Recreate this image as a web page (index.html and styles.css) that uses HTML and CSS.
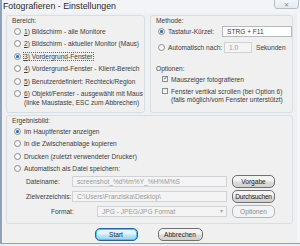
FILE: index.html
```html
<!DOCTYPE html>
<html lang="de">
<head>
    <meta charset="UTF-8">
    <title>Fotografieren - Einstellungen</title>
    <link rel="stylesheet" href="styles.css">
</head>
<body>
    <div class="window">
        <div class="titlebar">
            <span class="title">Fotografieren - Einstellungen</span>
            <span class="close">&#x2715;</span>
        </div>

        <div class="client">
            <div class="top-row">
                <div class="group bereich">
                    <div class="group-label">Bereich:</div>
                    <div class="row"><span class="radio"></span><u>1</u>) Bildschirm - alle Monitore</div>
                    <div class="row"><span class="radio"></span><u>2</u>) Bildschirm - aktueller Monitor (Maus)</div>
                    <div class="row"><span class="radio on"></span><span class="focus"><u>3</u>) Vordergrund-Fenster</span></div>
                    <div class="row"><span class="radio"></span><u>4</u>) Vordergrund-Fenster - Klient-Bereich</div>
                    <div class="row"><span class="radio"></span><u>5</u>) Benutzerdefiniert: Rechteck/Region</div>
                    <div class="row"><span class="radio"></span><u>6</u>) Objekt/Fenster - ausgewählt mit Maus</div>
                    <div class="sub-line">(linke Maustaste, ESC zum Abbrechen)</div>
                </div>

                <div class="group methode">
                    <div class="group-label">Methode:</div>
                    <div class="row field-row">
                        <span class="radio on"></span><span class="opt-text">Tastatur-Kürzel:</span>
                        <span class="input hotkey">STRG + F11</span>
                    </div>
                    <div class="row field-row second">
                        <span class="radio"></span><span class="opt-text">Automatisch nach:</span>
                        <span class="input disabled seconds">1.0</span>
                        <span class="unit">Sekunden</span>
                    </div>
                    <div class="group-label options-label">Optionen:</div>
                    <div class="check-row"><span class="check on"></span>Mauszeiger fotografieren</div>
                    <div class="check-row"><span class="check"></span>Fenster vertikal scrollen (bei Option 6)</div>
                    <div class="sub-line check-sub">(falls möglich/vom Fenster unterstützt)</div>
                </div>
            </div>

            <div class="group ergebnis">
                <div class="group-label">Ergebnisbild:</div>
                <div class="row"><span class="radio on"></span>Im Hauptfenster anzeigen</div>
                <div class="row"><span class="radio"></span>In die Zwischenablage kopieren</div>
                <div class="row"><span class="radio"></span>Drucken (zuletzt verwendeter Drucker)</div>
                <div class="row"><span class="radio"></span>Automatisch als Datei speichern:</div>

                <div class="file-row">
                    <span class="file-label">Dateiname:</span>
                    <span class="input disabled wide">screenshot_%d%m%Y_%H%M%S</span>
                    <span class="btn">Vorgabe</span>
                </div>
                <div class="file-row">
                    <span class="file-label">Zielverzeichnis:</span>
                    <span class="input disabled wide">C:\Users\Franziska\Desktop\</span>
                    <span class="btn tight">Durchsuchen</span>
                </div>
                <div class="file-row">
                    <span class="file-label format-label">Format:</span>
                    <span class="input disabled select">JPG - JPEG/JPG Format<span class="arrow">&#x25BE;</span></span>
                    <span class="btn btn-disabled">Optionen</span>
                </div>
            </div>

            <div class="actions">
                <span class="btn btn-default start">Start</span>
                <span class="btn abort">Abbrechen</span>
            </div>
        </div>
    </div>
</body>
</html>
```

FILE: styles.css
```css
/* General Styles */
* {
    margin: 0;
    padding: 0;
    box-sizing: border-box;
}

body {
    width: 300px;
    height: 246px;
    overflow: hidden;
    font-family: 'Liberation Sans', Arial, sans-serif;
    font-size: 6.6px;
    color: #3c3c3c;
    background: #e9eef4;
}

u {
    text-decoration: underline;
}

.window {
    width: 300px;
    height: 244px;
    border-left: 2px solid #8ea3bb;
    border-bottom: 1px solid #8ea3bb;
    background: #f2f4f7;
}

/* Title bar */
.titlebar {
    height: 13px;
    position: relative;
    padding-left: 1px;
}

.title {
    font-size: 8.8px;
    line-height: 12px;
    color: #2a2a2a;
}

.close {
    position: absolute;
    right: 1px;
    top: -3px;
    width: 25px;
    height: 12px;
    border: 1px solid #b5bfcb;
    border-radius: 3px;
    background: linear-gradient(#f7f9fb, #e4e9ef);
    color: #7a8796;
    font-size: 6px;
    line-height: 12px;
    text-align: center;
    padding-top: 1px;
}

/* Client area */
.client {
    height: 230px;
    margin-right: 3px;
    margin-left: 1px;
    padding: 2px 4px 0 3px;
    background: #f0f0f0;
}

.top-row {
    display: flex;
    gap: 5px;
}

.group {
    border: 1px solid #d5dfe5;
    border-radius: 3px;
}

.group-label {
    line-height: 9px;
}

.bereich {
    width: 139px;
    height: 98px;
    padding-left: 5px;
}

.methode {
    flex: 1;
    height: 98px;
    padding-left: 5px;
}

.row {
    height: 12.5px;
    display: flex;
    align-items: center;
    white-space: nowrap;
}

/* Radios and checkboxes */
.radio {
    width: 7px;
    height: 7px;
    margin: 0 3px 0 2px;
    border: 1px solid #8b8f94;
    border-radius: 50%;
    background: radial-gradient(circle, #ffffff 30%, #e4e6e8);
    flex-shrink: 0;
    position: relative;
}

.radio.on::after {
    content: "";
    position: absolute;
    left: 1px;
    top: 1px;
    width: 3px;
    height: 3px;
    border-radius: 50%;
    background: #2a6cc0;
    box-shadow: 0 0 1px #6fb0f0;
}

.focus {
    outline: 1px dotted #666;
}

.sub-line {
    margin-left: 12px;
    line-height: 8px;
    margin-top: -1px;
    white-space: nowrap;
}

.field-row {
    height: 13px;
}

.field-row.second {
    margin-top: 3px;
}

.opt-text {
    width: 54px;
}

.input {
    display: inline-block;
    height: 11px;
    line-height: 9px;
    border: 1px solid #b5bac0;
    background: #fff;
    padding-left: 4px;
    white-space: nowrap;
    overflow: hidden;
}

.input.disabled {
    background: #f4f4f4;
    border-color: #cfd2d6;
    color: #9a9a9a;
}

.hotkey {
    width: 70px;
}

.seconds {
    width: 28px;
    margin-left: 2px;
}

.unit {
    margin-left: 4px;
}

.options-label {
    margin-top: 10px;
}

.check-row {
    height: 12px;
    display: flex;
    align-items: center;
    padding-left: 6px;
    white-space: nowrap;
}

.check {
    width: 6px;
    height: 6px;
    margin-right: 3px;
    border: 1px solid #8b8f94;
    background: linear-gradient(#e9eaec, #ffffff);
    position: relative;
    flex-shrink: 0;
}

.check.on::after {
    content: "\2713";
    position: absolute;
    left: 0;
    top: -3px;
    font-size: 6px;
    color: #2a5fa8;
}

.check-sub {
    margin-left: 15px;
}

/* Ergebnisbild */
.ergebnis {
    margin-top: 2px;
    height: 109px;
    padding-left: 5px;
    padding-right: 4px;
}

.file-row {
    height: 13px;
    display: flex;
    align-items: center;
    margin-bottom: 2px;
    white-space: nowrap;
}

.file-label {
    width: 60px;
    padding-left: 14px;
}

.format-label {
    width: 85px;
    padding-left: 39px;
}

.wide {
    width: 155px;
}

.select {
    width: 130px;
    position: relative;
}

.arrow {
    position: absolute;
    right: 3px;
    top: 0;
    color: #a8a8a8;
    font-size: 6px;
}

/* Buttons */
.btn {
    display: inline-block;
    height: 13px;
    width: 43px;
    margin-left: 5px;
    line-height: 11px;
    text-align: center;
    border: 1px solid #707070;
    border-radius: 5px;
    background: linear-gradient(#f3f3f3 45%, #dcdcdc 55%, #d0d0d0);
    color: #1a1a1a;
    white-space: nowrap;
    overflow: hidden;
}

.btn.tight {
    letter-spacing: -0.2px;
}

.btn-disabled {
    border-color: #b2b6ba;
    background: #f4f4f4;
    color: #8c8c8c;
}

.btn-default {
    border-color: #2c628b;
    background: linear-gradient(#e5f4fc 45%, #c4e5f6 55%, #98d1ef);
    box-shadow: inset 0 0 0 1px #48c6f4;
}

.actions {
    display: flex;
    justify-content: center;
    gap: 20px;
    margin-top: 4px;
    padding-right: 2px;
}

.actions .btn {
    margin-left: 0;
    height: 13px;
}

.start {
    width: 43px;
}

.abort {
    width: 45px;
}
```
